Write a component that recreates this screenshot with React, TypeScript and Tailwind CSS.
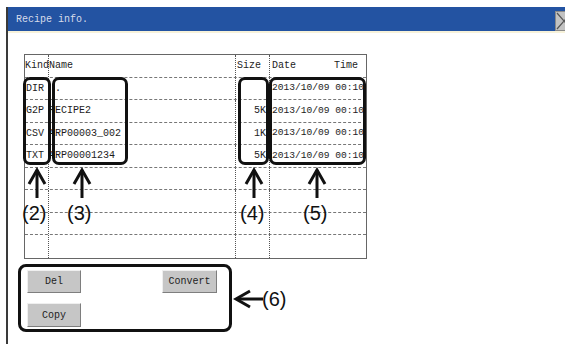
const mono = { fontFamily: '"Liberation Mono", "DejaVu Sans Mono", monospace' };

type Row = { kind: string; name: string; size: string; date: string };

const rows: Row[] = [
  { kind: "DIR", name: ".", size: "", date: "2013/10/09 00:10" },
  { kind: "G2P", name: "RECIPE2", size: "5K", date: "2013/10/09 00:10" },
  { kind: "CSV", name: "ARP00003_002", size: "1K", date: "2013/10/09 00:10" },
  { kind: "TXT", name: "ARP00001234", size: "5K", date: "2013/10/09 00:10" },
  { kind: "", name: "", size: "", date: "" },
  { kind: "", name: "", size: "", date: "" },
  { kind: "", name: "", size: "", date: "" },
  { kind: "", name: "", size: "", date: "" },
];

function UpArrow({ x }: { x: number }) {
  return (
    <svg
      className="absolute top-[167px]"
      style={{ left: x - 10 }}
      width="20"
      height="31"
      viewBox="0 0 20 31"
      fill="none"
      stroke="#111"
      strokeWidth="3"
    >
      <path d="M10 31V3" />
      <path d="M2 17L10 3L18 17" />
    </svg>
  );
}

function Label({ x, y, text }: { x: number; y: number; text: string }) {
  return (
    <span
      className="absolute text-[20px] leading-none text-[#111] whitespace-nowrap"
      style={{ left: x, top: y, fontFamily: '"Liberation Sans", Arial, sans-serif' }}
    >
      {text}
    </span>
  );
}

function Btn({ label, w, h }: { label: string; w: string; h: string }) {
  return (
    <button
      className={`${w} ${h} bg-[#c6c6c6] border border-t-[#efefef] border-l-[#efefef] border-r-[#7e7e7e] border-b-[#7e7e7e] text-[10px] text-[#222] flex items-center justify-center`}
      style={mono}
    >
      {label}
    </button>
  );
}

export default function App() {
  return (
    <div className="relative w-[565px] h-[344px] overflow-hidden bg-white">
      <div className="ml-[6px] mt-[7px] w-[569px] h-[337px] border-l-2 border-[#3a3a3a] flex flex-col">
        {/* title bar */}
        <div className="h-[24px] bg-[#2353a2] flex items-start">
          <span className="pl-[8px] mt-[8px] text-[10px] leading-none text-[#d6dcea]" style={mono}>
            Recipe info.
          </span>
          <div className="ml-auto mr-[2px] mt-[4px] w-[18px] h-[20px] bg-[#c2c2c2] border border-[#8a8a8a]">
            <svg width="16" height="18" viewBox="0 0 16 18" stroke="#555" strokeWidth="1.2" fill="none">
              <path d="M1 1L15 17M15 1L1 17" />
            </svg>
          </div>
        </div>
        <div className="h-[2px] bg-[#f7f2da]" />

        {/* content */}
        <div className="pl-[16px] pt-[21px] flex flex-col">
          <div
            className="w-[343px] h-[205px] border border-[#666] grid grid-rows-[repeat(9,minmax(0,1fr))] text-[10px] text-[#1c1c1c]"
            style={mono}
          >
            <div className="grid grid-cols-[24px_187px_34px_1fr] border-b border-dashed border-[#777]">
              <div className="border-r border-dotted border-[#555] flex items-center whitespace-nowrap">Kind</div>
              <div className="border-r border-dotted border-[#555] flex items-center">Name</div>
              <div className="border-r border-dotted border-[#555] flex items-center pl-[1px]">Size</div>
              <div className="flex items-center justify-between pl-[2px] pr-[8px]">
                <span>Date</span>
                <span>Time</span>
              </div>
            </div>
            {rows.map((r, i) => (
              <div
                key={i}
                className={`grid grid-cols-[24px_187px_34px_1fr] ${i < rows.length - 1 ? "border-b border-dashed border-[#777]" : ""}`}
              >
                <div className="border-r border-dotted border-[#555] flex items-center pl-[1px]">{r.kind}</div>
                <div className={`border-r border-dotted border-[#555] flex items-center whitespace-nowrap ${r.name === "." ? "pl-[6px]" : ""}`}>
                  {r.name}
                </div>
                <div className="border-r border-dotted border-[#555] flex items-center justify-end pr-[3px]">{r.size}</div>
                <div className="flex items-center whitespace-nowrap pl-[2px] text-[9.6px]">{r.date}</div>
              </div>
            ))}
          </div>

          <div className="mt-[11px] ml-[3px] w-[190px] flex flex-col gap-[10px]">
            <div className="flex justify-between">
              <Btn label="Del" w="w-[54px]" h="h-[23px]" />
              <Btn label="Convert" w="w-[55px]" h="h-[23px]" />
            </div>
            <Btn label="Copy" w="w-[54px]" h="h-[24px]" />
          </div>
        </div>
      </div>

      {/* annotations */}
      <div className="absolute left-[23px] top-[77px] w-[28px] h-[88px] border-[3px] border-[#111] rounded-[7px]" />
      <div className="absolute left-[52px] top-[77px] w-[76px] h-[88px] border-[3px] border-[#111] rounded-[7px]" />
      <div className="absolute left-[238px] top-[77px] w-[31px] h-[88px] border-[3px] border-[#111] rounded-[7px]" />
      <div className="absolute left-[269px] top-[77px] w-[97px] h-[88px] border-[3px] border-[#111] rounded-[7px]" />

      <UpArrow x={37} />
      <UpArrow x={82} />
      <UpArrow x={254} />
      <UpArrow x={317} />

      <Label x={22} y={203} text="(2)" />
      <Label x={67} y={203} text="(3)" />
      <Label x={240} y={203} text="(4)" />
      <Label x={303} y={203} text="(5)" />

      <div className="absolute left-[18px] top-[264px] w-[214px] h-[68px] border-[3px] border-[#111] rounded-[8px]" />
      <svg className="absolute left-[233px] top-[289px]" width="30" height="20" viewBox="0 0 30 20" fill="none" stroke="#111" strokeWidth="3">
        <path d="M30 10H4" />
        <path d="M17 2L3 10L17 18" />
      </svg>
      <Label x={262} y={289} text="(6)" />
    </div>
  );
}
